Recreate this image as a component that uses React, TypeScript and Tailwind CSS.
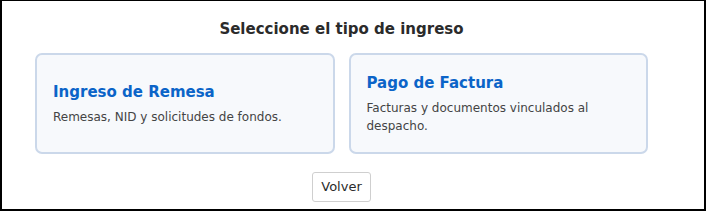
export default function App() {
  const options = [
    {
      title: "Ingreso de Remesa",
      text: "Remesas, NID y solicitudes de fondos.",
    },
    {
      title: "Pago de Factura",
      text: "Facturas y documentos vinculados al despacho.",
    },
  ];

  return (
    <div
      className="w-[706px] h-[211px] bg-white border-x-2 border-b-2 border-t border-black pl-[33px] pt-[18px]"
      style={{ fontFamily: '"DejaVu Sans", Verdana, sans-serif' }}
    >
      <div className="w-[613px] flex flex-col items-center">
        <h2 className="text-[15px] leading-[20px] font-bold text-[#2b2b2b]">
          Seleccione el tipo de ingreso
        </h2>

        <div className="mt-[14px] w-full grid grid-cols-2 gap-[14px]">
          {options.map((o) => (
            <button
              key={o.title}
              type="button"
              className="h-[101px] rounded-[7px] border-2 border-[#cbd8ea] bg-[#f7f9fc] px-[16px] flex flex-col justify-center text-left"
            >
              <span className="text-[15px] leading-[20px] font-bold text-[#0b64c8]">
                {o.title}
              </span>
              <span className="mt-[6px] text-[12px] leading-[18px] text-[#444]">
                {o.text}
              </span>
            </button>
          ))}
        </div>

        <button
          type="button"
          className="mt-[18px] h-[30px] px-[8px] rounded-[3px] border border-[#cfcfcf] bg-white text-[13px] text-[#2b2b2b]"
        >
          Volver
        </button>
      </div>
    </div>
  );
}
